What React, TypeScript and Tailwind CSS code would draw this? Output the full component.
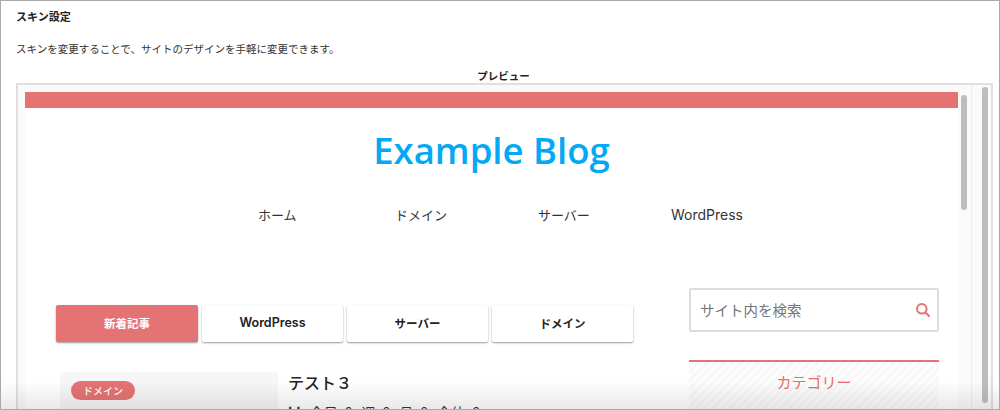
import React from 'react';

function Tab({ label, active, className }: { label: string; active?: boolean; className: string }) {
  return (
    <div
      className={`h-[37px] flex items-center justify-center rounded-[2px] font-bold shadow-[0_1px_2px_rgba(0,0,0,0.4)] ${
        active ? 'bg-[#e57373] text-white' : 'bg-white text-[#222]'
      } ${className}`}
    >
      {label}
    </div>
  );
}

function Scrollbar({ className }: { className: string }) {
  return <div className={`w-[6px] rounded-full bg-[#bdbdbd] ${className}`} />;
}

export default function App() {
  return (
    <div className="relative w-[1000px] h-[410px] overflow-hidden bg-white border border-[#aaa] px-[15px] text-[#222] [font-family:'Noto_Sans_CJK_JP','Liberation_Sans',sans-serif]">
      <h1 className="mt-[8px] text-[11px] leading-[15px] font-bold">スキン設定</h1>
      <p className="mt-[17px] text-[10.5px] leading-[15px] text-[#333]">スキンを変更することで、サイトのデザインを手軽に変更できます。</p>
      <div className="mt-[13px] text-center text-[10.5px] leading-[13px] font-bold pl-[7px]">プレビュー</div>

      <div className="flex w-[977px] h-[340px] border-2 border-[#e0e0e0] mt-[1px] bg-[#fafafa]">
        <div className="w-[954px] shrink-0 flex border-r border-[#eee] pl-[7px] pt-[7px]">
          <div className="w-[933px] shrink-0 bg-white">
            <div className="h-[16px] bg-[#e57373]" />
            <div className="mt-[17px] text-center text-[36.5px] leading-[50px] font-semibold text-[#03a9f4] [font-family:'Open_Sans',sans-serif]">
              Example Blog
            </div>
            <nav className="mt-[30px] flex pl-[233px] text-[13px] leading-[20px] text-[#333]">
              <span className="w-[137px]">ホーム</span>
              <span className="w-[143px]">ドメイン</span>
              <span className="w-[133px]">サーバー</span>
              <span className="text-[14px] [font-family:Inter,sans-serif]">WordPress</span>
            </nav>
            <div className="mt-[63px] flex pl-[31px]">
              <div className="w-[633px] shrink-0">
                <div className="flex gap-[4px] mt-[17px]">
                  <Tab label="新着記事" active className="w-[142px] text-[11.5px]" />
                  <Tab label="WordPress" className="w-[141px] text-[12.5px] font-semibold [font-family:Inter,sans-serif]" />
                  <Tab label="サーバー" className="w-[141px] text-[11.5px]" />
                  <Tab label="ドメイン" className="w-[141px] text-[11.5px]" />
                </div>
                <div className="mt-[31px] flex">
                  <div className="ml-[5px] w-[216px] h-[60px] shrink-0 bg-[#f6f6f6] rounded-[2px] shadow-[0_0_2px_rgba(0,0,0,0.12)] pl-[10px] pt-[8px]">
                    <span className="flex items-center justify-center w-[64px] h-[19px] rounded-full bg-[#e57373] text-white text-[10px] font-medium">ドメイン</span>
                  </div>
                  <div className="ml-[11px] -mt-[2px]">
                    <div className="text-[16px] leading-[22px] font-medium text-[#222]">テスト３</div>
                    <div className="mt-[11px] flex gap-[9px] text-[14px] leading-[16px] text-[#333] whitespace-nowrap">
                      <span className="font-bold">lıl</span>
                      <span>今日: 0</span>
                      <span>週: 0</span>
                      <span>月: 0</span>
                      <span>全体: 0</span>
                    </div>
                  </div>
                </div>
              </div>
              <aside className="w-[250px] shrink-0">
                <div className="h-[44px] border-2 border-[#ddd] rounded-[2px] flex items-center justify-between pl-[9px] pr-[6px]">
                  <span className="text-[14.5px] text-[#757575]">サイト内を検索</span>
                  <svg width="16" height="16" viewBox="0 0 16 16" fill="none" stroke="#e57373" strokeWidth="2" strokeLinecap="round">
                    <circle cx="6.8" cy="6.8" r="4.8" />
                    <path d="M10.5 10.5 14 14" />
                  </svg>
                </div>
                <div className="mt-[28px] border-t-2 border-[#e57373] h-[60px] pt-[8px] text-center text-[15px] leading-[24px] text-[#e96a6a] bg-[repeating-linear-gradient(135deg,#f8f8f8_0,#f8f8f8_3px,#fdfdfd_3px,#fdfdfd_6px)]">
                  カテゴリー
                </div>
              </aside>
            </div>
          </div>
          <Scrollbar className="ml-[3px] mt-[3px] h-[115px]" />
        </div>
        <div className="w-[20px] shrink-0 pl-[10px] pt-[2px]">
          <Scrollbar className="h-[316px]" />
        </div>
      </div>

      <div className="absolute left-0 right-0 bottom-0 h-[28px] bg-gradient-to-b from-transparent to-black/[0.09]" />
    </div>
  );
}
